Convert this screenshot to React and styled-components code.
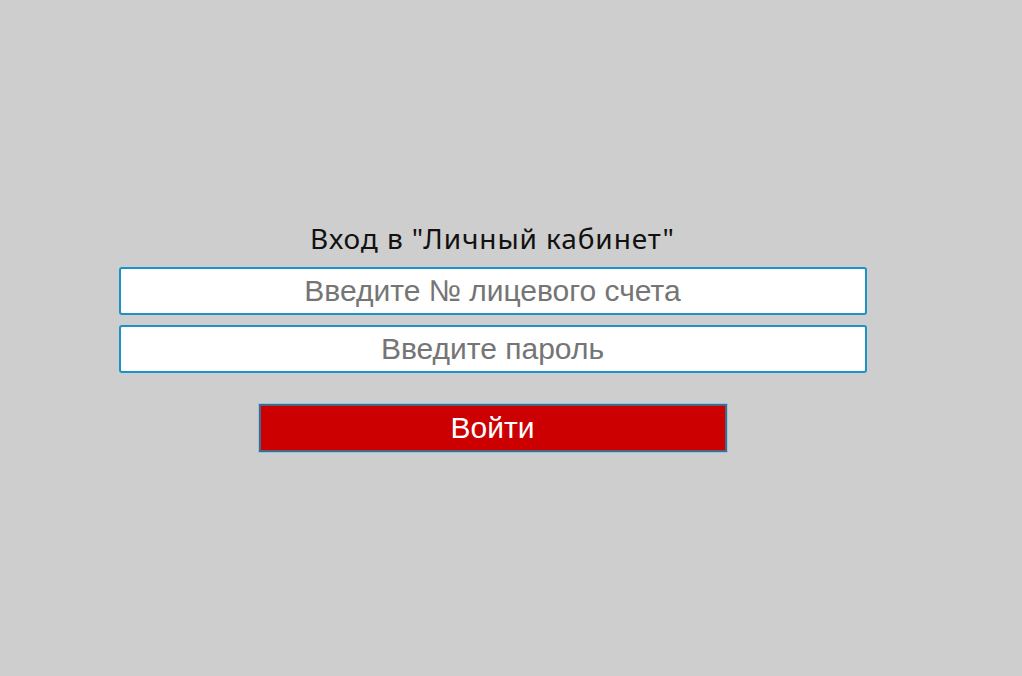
import React from "react";
import styled, { createGlobalStyle } from "styled-components";

const Global = createGlobalStyle`
  html, body { margin: 0; padding: 0; background: #cecece; }
  body { font-family: "Liberation Sans", Arial, sans-serif; }
`;

const Page = styled.div`
  width: 985px;
  height: 676px;
  display: flex;
  flex-direction: column;
  align-items: center;
  padding-top: 218px;
  box-sizing: border-box;
`;

const Title = styled.h1`
  margin: 0 0 9px;
  font-family: "Noto Sans", sans-serif;
  font-weight: 400;
  font-size: 28px;
  letter-spacing: 0.9px;
  line-height: 40px;
  color: #111;
`;

const Form = styled.form`
  display: flex;
  flex-direction: column;
  align-items: center;
  gap: 10px;
  width: 748px;
`;

const Field = styled.input`
  width: 100%;
  height: 48px;
  box-sizing: border-box;
  border: 2px solid #1a94c6;
  border-radius: 3px;
  background: #fff;
  text-align: center;
  font-family: "Liberation Sans", Arial, sans-serif;
  font-size: 30px;
  color: #333;
  outline: none;
  &::placeholder { color: #757575; }
`;

const Submit = styled.button`
  margin-top: 21px;
  width: 468px;
  height: 48px;
  box-sizing: border-box;
  background: #cc0000;
  border: 2px solid #4a6680;
  box-shadow: 0 0 0 1px #8fc9e6;
  color: #fff;
  font-family: "Liberation Sans", Arial, sans-serif;
  font-size: 30px;
  cursor: pointer;
`;

export default function App() {
  return (
    <>
      <Global />
      <Page>
        <Title>Вход в "Личный кабинет"</Title>
        <Form onSubmit={(e) => e.preventDefault()}>
          <Field placeholder="Введите № лицевого счета" />
          <Field type="password" placeholder="Введите пароль" />
          <Submit type="submit">Войти</Submit>
        </Form>
      </Page>
    </>
  );
}
